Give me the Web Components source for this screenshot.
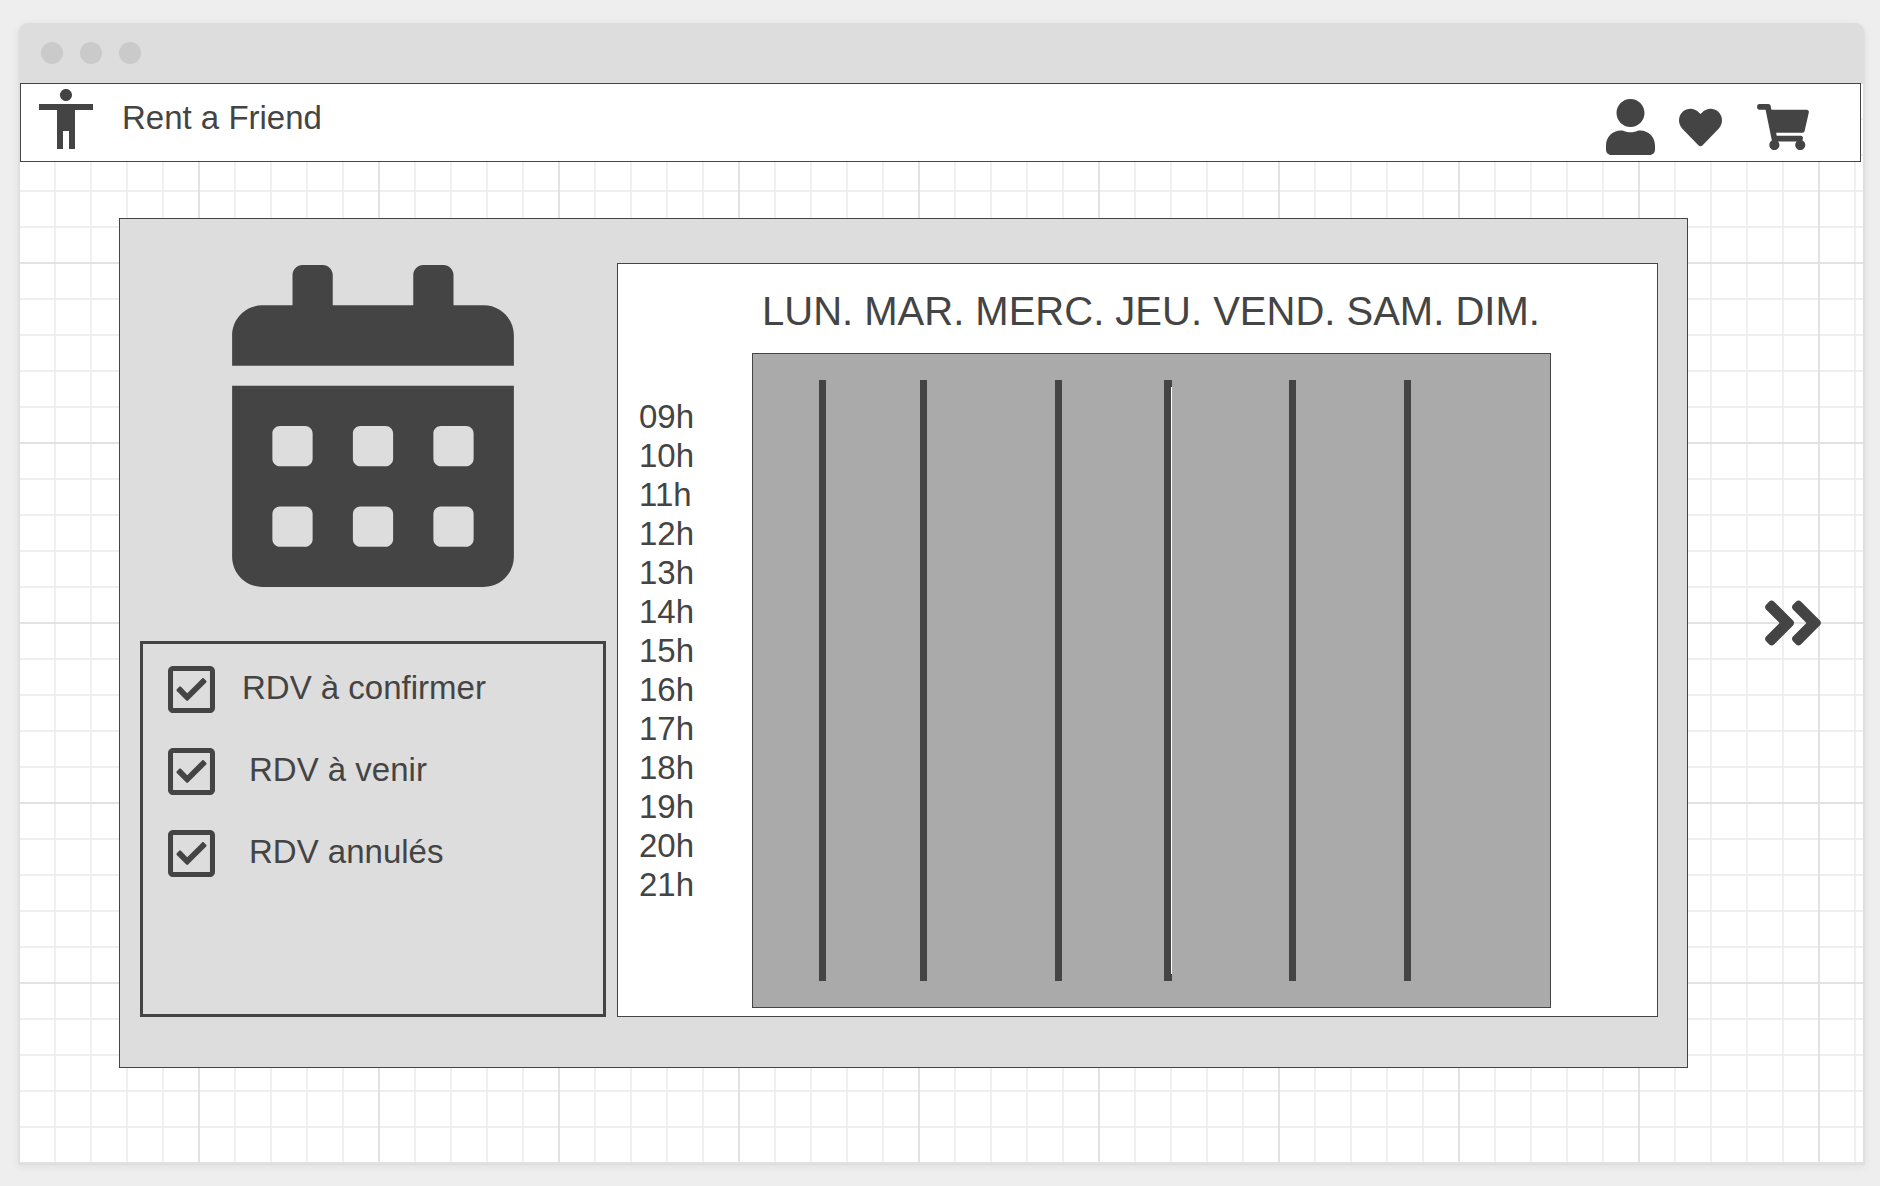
<!DOCTYPE html>
<html lang="fr">
<head>
<meta charset="utf-8">
<meta name="viewport" content="width=device-width, initial-scale=1">
<title>Rent a Friend</title>
<style>
  html { background: #eee; }
  body {
    --ink: #444;
    --panel: #ddd;
    margin: 0;
    color: var(--ink);
    font: 33px/39px "Liberation Sans", Arial, sans-serif;
  }
</style>
</head>
<body>
<browser-window>
  <app-header slot="header">Rent a Friend</app-header>
  <planning-board>
    <filter-panel slot="filters">
      <filter-option>RDV à confirmer</filter-option>
      <filter-option indent>RDV à venir</filter-option>
      <filter-option indent>RDV annulés</filter-option>
    </filter-panel>
    <week-calendar></week-calendar>
  </planning-board>
  <next-button></next-button>
</browser-window>

<script>
const ICONS = {
  person: ['3 2 18 20', 'M12 2c1.1 0 2 .9 2 2s-.9 2-2 2-2-.9-2-2 .9-2 2-2zm9 7h-6v13h-2v-6h-2v6H9V9H3V7h18v2z'],
  user: ['0 0 448 512', 'M224 256c70.7 0 128-57.3 128-128S294.7 0 224 0 96 57.3 96 128s57.3 128 128 128zm89.6 32h-16.7c-22.2 10.2-46.9 16-72.9 16s-50.6-5.8-72.9-16h-16.7C60.2 288 0 348.2 0 422.4V464c0 26.5 21.5 48 48 48h352c26.5 0 48-21.5 48-48v-41.6c0-74.2-60.2-134.4-134.4-134.4z'],
  heart: ['0 0 512 512', 'M462.3 62.6C407.5 15.9 326 24.3 275.7 76.2L256 96.5l-19.7-20.3C186.1 24.3 104.5 15.9 49.7 62.6c-62.8 53.6-66.1 149.8-9.9 207.9l193.5 199.8c12.5 12.9 32.8 12.9 45.3 0l193.5-199.8c56.3-58.1 53-154.3-9.8-207.9z'],
  cart: ['0 0 576 512', 'M528.12 301.319l47.273-208C578.806 78.301 567.391 64 551.99 64H159.208l-9.166-44.81C147.758 8.021 137.93 0 126.529 0H24C10.745 0 0 10.745 0 24v16c0 13.255 10.745 24 24 24h69.883l70.248 343.435C147.325 417.1 136 435.222 136 456c0 30.928 25.072 56 56 56s56-25.072 56-56c0-15.674-6.447-29.835-16.824-40h209.647C430.447 426.165 424 440.326 424 456c0 30.928 25.072 56 56 56s56-25.072 56-56c0-22.172-12.888-41.332-31.579-50.405l5.517-24.276c3.413-15.018-8.002-29.319-23.403-29.319H218.117l-6.545-32h293.145c11.206 0 20.92-7.754 23.403-18.681z'],
  calendar: ['0 0 448 512', 'M0 464c0 26.5 21.5 48 48 48h352c26.5 0 48-21.5 48-48V192H0v272zm320-196c0-6.600 5.400-12 12-12h40c6.600 0 12 5.400 12 12v40c0 6.600-5.400 12-12 12h-40c-6.600 0-12-5.400-12-12v-40zm0 128c0-6.600 5.400-12 12-12h40c6.600 0 12 5.400 12 12v40c0 6.600-5.400 12-12 12h-40c-6.600 0-12-5.400-12-12v-40zM192 268c0-6.600 5.400-12 12-12h40c6.600 0 12 5.400 12 12v40c0 6.600-5.400 12-12 12h-40c-6.600 0-12-5.400-12-12v-40zm0 128c0-6.600 5.400-12 12-12h40c6.600 0 12 5.400 12 12v40c0 6.600-5.400 12-12 12h-40c-6.600 0-12-5.400-12-12v-40zM64 268c0-6.600 5.400-12 12-12h40c6.600 0 12 5.400 12 12v40c0 6.600-5.400 12-12 12H76c-6.600 0-12-5.400-12-12v-40zm0 128c0-6.600 5.400-12 12-12h40c6.600 0 12 5.400 12 12v40c0 6.600-5.400 12-12 12H76c-6.600 0-12-5.400-12-12v-40zM400 64h-48V16c0-8.800-7.200-16-16-16h-32c-8.800 0-16 7.200-16 16v48H160V16c0-8.800-7.200-16-16-16h-32c-8.800 0-16 7.200-16 16v48H48C21.500 64 0 85.500 0 112v48h448v-48c0-26.500-21.500-48-48-48z'],
  next: ['24 96 400 320', 'M224.3 273l-136 136c-9.4 9.4-24.6 9.4-33.900 0l-22.600-22.600c-9.400-9.400-9.400-24.600 0-33.900l96.400-96.400-96.400-96.400c-9.400-9.400-9.400-24.600 0-33.900L54.300 103c9.400-9.400 24.600-9.400 33.900 0l136 136c9.500 9.400 9.500 24.600.1 34zm192-34l-136-136c-9.400-9.400-24.600-9.400-33.900 0l-22.600 22.600c-9.400 9.400-9.400 24.600 0 33.900l96.400 96.400-96.400 96.400c-9.400 9.400-9.400 24.600 0 33.900l22.600 22.600c9.400 9.400 24.600 9.400 33.900 0l136-136c9.400-9.200 9.400-24.400 0-33.800z']
};

const BUTTON_CSS = `
  button { display: block; padding: 0; border: 0; background: none; color: inherit; cursor: pointer; }
  svg { display: block; fill: currentColor; }
`;

const icon = (name, width, height) =>
  `<svg width="${width}" height="${height}" viewBox="${ICONS[name][0]}" aria-hidden="true"><path d="${ICONS[name][1]}"/></svg>`;

function define(name, markup) {
  const template = document.createElement('template');
  template.innerHTML = markup;
  customElements.define(name, class extends HTMLElement {
    constructor() {
      super();
      this.attachShadow({ mode: 'open' }).append(template.content.cloneNode(true));
    }
  });
}

define('browser-window', `
  <style>
    :host { display: flex; box-sizing: border-box; min-height: 100vh; padding: 23px 15px 21px 18px; }
    .window {
      flex: 1; display: flex; flex-direction: column; min-width: 0;
      border: 2px solid #dfdfdf; border-top: 0; border-radius: 10px 10px 0 0;
      background: var(--panel); box-shadow: 0 2px 10px rgba(0, 0, 0, .06);
    }
    .bar { display: flex; gap: 17px; padding: 19px 21px; }
    .dot { width: 22px; height: 22px; border-radius: 50%; background: #cacaca; }
    .page {
      flex: 1; display: flex; flex-direction: column;
      background:
        linear-gradient(#e2e2e2 2px, transparent 2px) 0 -1px / 100% 180px,
        linear-gradient(90deg, #e2e2e2 2px, transparent 2px) -2px 0 / 180px 100%,
        linear-gradient(#efefef 2px, transparent 2px) 0 -1px / 100% 36px,
        linear-gradient(90deg, #efefef 2px, transparent 2px) -2px 0 / 36px 100%,
        #fff;
    }
    main { display: flex; align-items: flex-start; padding: 56px 42px 95px 99px; }
    ::slotted(planning-board) { flex: 1; min-width: 0; }
  </style>
  <div class="window">
    <div class="bar"><span class="dot"></span><span class="dot"></span><span class="dot"></span></div>
    <div class="page">
      <slot name="header"></slot>
      <main><slot></slot></main>
    </div>
  </div>
`);

define('app-header', `
  <style>
    ${BUTTON_CSS}
    :host {
      display: flex; align-items: flex-start; box-sizing: border-box; height: 79px;
      margin-right: 2px; padding: 5px 51px 0 18px; border: 1px solid var(--ink); background: #fff;
    }
    h1 { margin: 9px 0 0 29px; font: inherit; }
    nav { display: flex; align-items: center; gap: 24px; margin: 10px 0 0 auto; }
    .cart { margin-left: 11px; }
  </style>
  ${icon('person', 54, 60)}
  <h1><slot></slot></h1>
  <nav>
    <button type="button" aria-label="Profil">${icon('user', 49, 56)}</button>
    <button type="button" aria-label="Favoris">${icon('heart', 43, 43)}</button>
    <button type="button" aria-label="Panier" class="cart">${icon('cart', 52, 46)}</button>
  </nav>
`);

define('planning-board', `
  <style>
    :host {
      display: flex; gap: 11px; box-sizing: border-box; padding: 44px 29px 50px 20px;
      border: 1px solid var(--ink); background: var(--panel);
    }
    aside { display: flex; flex-direction: column; flex: 0 0 466px; gap: 54px; padding-top: 2px; }
    svg { display: block; align-self: center; fill: currentColor; }
    section { display: flex; flex: 1; min-width: 0; }
    ::slotted(week-calendar) { flex: 1; }
  </style>
  <aside>${icon('calendar', 282, 322)}<slot name="filters"></slot></aside>
  <section><slot></slot></section>
`);

define('filter-panel', `
  <style>
    :host {
      display: flex; flex-direction: column; gap: 35px; box-sizing: border-box;
      min-height: 376px; padding: 22px 25px; border: 3px solid var(--ink);
    }
  </style>
  <slot></slot>
`);

define('filter-option', `
  <style>
    :host { display: block; }
    label { display: flex; align-items: center; gap: 27px; cursor: pointer; }
    :host([indent]) label { gap: 34px; }
    .box { display: grid; }
    input, svg { grid-area: 1 / 1; width: 47px; height: 47px; margin: 0; }
    input { appearance: none; cursor: pointer; }
    svg { fill: currentColor; pointer-events: none; }
    input:not(:checked) + svg .tick { display: none; }
    .text { padding-bottom: 5px; }
  </style>
  <label>
    <span class="box">
      <input type="checkbox" checked>
      <svg viewBox="0 32 448 448" aria-hidden="true">
        <path d="M400 32H48C21.490 32 0 53.490 0 80v352c0 26.510 21.490 48 48 48h352c26.510 0 48-21.490 48-48V80c0-26.510-21.490-48-48-48zm0 400H48V80h352v352z"/>
        <path class="tick" d="M364.136 190.276L191.547 361.480c-4.705 4.667-12.303 4.637-16.970-.068l-90.781-91.516c-4.667-4.705-4.637-12.303.069-16.971l22.719-22.536c4.705-4.667 12.303-4.637 16.970.069l59.792 60.277 141.352-140.216c4.705-4.667 12.303-4.637 16.970.068l22.536 22.718c4.667 4.706 4.637 12.304-.068 16.971z"/>
      </svg>
    </span>
    <span class="text"><slot></slot></span>
  </label>
`);

define('week-calendar', `
  <style>
    :host {
      display: flex; box-sizing: border-box; padding: 23px 106px 8px 21px;
      border: 1px solid var(--ink); background: #fff;
    }
    ol, h2 { margin: 0; padding: 0; list-style: none; font-weight: 400; }
    ol { flex: 0 0 113px; padding-top: 110px; }
    .week { flex: 1; min-width: 0; display: flex; flex-direction: column; }
    h2 { padding: 0 0 18px 10px; font-size: 40px; line-height: 48px; white-space: nowrap; }
    .lanes {
      flex: 1; display: grid; padding: 26px 0; border: 1px solid var(--ink); background: #aaa;
      grid-template-columns: 73fr 101fr 135fr 110fr 124fr 115fr 139fr;
    }
    .lane { border-right: 7px solid var(--ink); }
    .lane:last-child { border: 0; }
    .current { position: relative; border-right-width: 8px; }
    .current::after {
      content: ""; position: absolute; top: 7px; bottom: 7px; right: -8px; width: 1px; background: #fff;
    }
  </style>
  <ol>${Array.from({ length: 13 }, (_, i) => `<li>${String(i + 9).padStart(2, '0')}h</li>`).join('')}</ol>
  <div class="week">
    <h2>LUN. MAR. MERC. JEU. VEND. SAM. DIM.</h2>
    <div class="lanes">
      <div class="lane"></div><div class="lane"></div><div class="lane"></div>
      <div class="lane current"></div><div class="lane"></div><div class="lane"></div><div class="lane"></div>
    </div>
  </div>
`);

define('next-button', `
  <style>
    ${BUTTON_CSS}
    :host { display: block; margin: 382px 0 0 77px; }
  </style>
  <button type="button" aria-label="Semaine suivante">${icon('next', 56, 46)}</button>
`);
</script>
</body>
</html>
